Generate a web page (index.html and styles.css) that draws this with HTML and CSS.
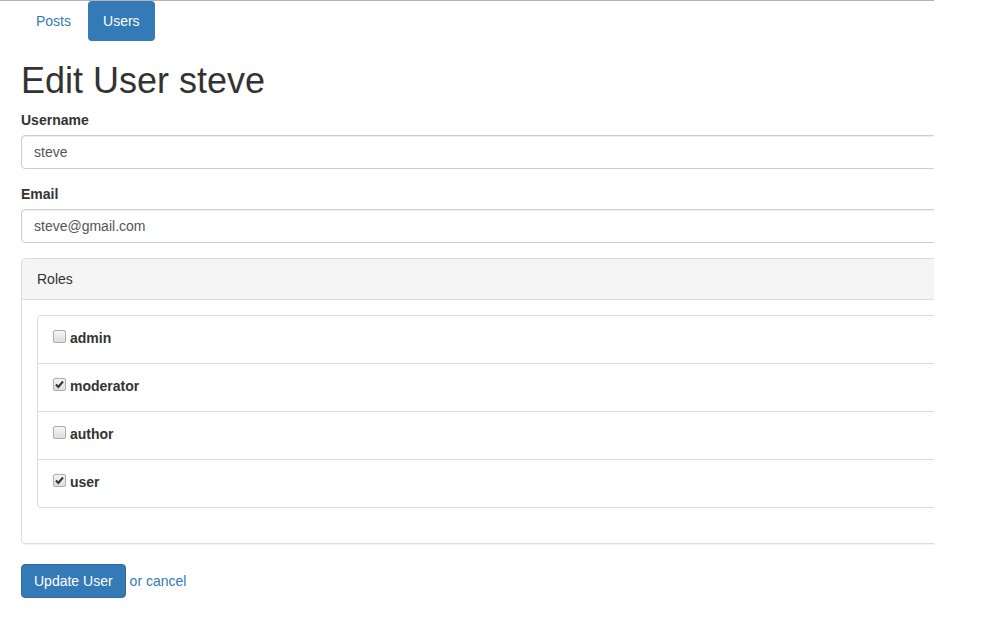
FILE: index.html
```html
<!DOCTYPE html>
<html>
<head>
<meta charset="utf-8">
<link rel="stylesheet" href="styles.css">
</head>
<body>
<div class="frame">
  <div class="container">
    <ul class="nav">
      <li><a href="#" class="pill">Posts</a></li>
      <li><a href="#" class="pill active">Users</a></li>
    </ul>
    <h1>Edit User steve</h1>
    <form>
      <div class="form-group">
        <label class="label">Username</label>
        <div class="input">steve</div>
      </div>
      <div class="form-group">
        <label class="label">Email</label>
        <div class="input">steve@gmail.com</div>
      </div>
      <div class="panel">
        <div class="panel-heading">Roles</div>
        <div class="panel-body">
          <div class="list">
            <div class="item"><span class="cb"></span><span class="role">admin</span></div>
            <div class="item"><span class="cb"><svg viewBox="0 0 13 13" width="13" height="13"><path d="M3 6.5 L5.3 9 L10 3.5" fill="none" stroke="#333" stroke-width="2"/></svg></span><span class="role">moderator</span></div>
            <div class="item"><span class="cb"></span><span class="role">author</span></div>
            <div class="item"><span class="cb"><svg viewBox="0 0 13 13" width="13" height="13"><path d="M3 6.5 L5.3 9 L10 3.5" fill="none" stroke="#333" stroke-width="2"/></svg></span><span class="role">user</span></div>
          </div>
        </div>
      </div>
      <div class="actions">
        <button type="button" class="btn">Update User</button>
        <a href="#" class="cancel">or cancel</a>
      </div>
    </form>
  </div>
</div>
</body>
</html>
```
FILE: styles.css
```css
html, body {
  margin: 0;
  padding: 0;
  background: #fff;
}
body {
  font-family: "Liberation Sans", Arial, sans-serif;
  font-size: 14px;
  line-height: 20px;
  color: #333;
}
.frame {
  width: 934px;
  height: 641px;
  border-top: 1px solid #b3b3b3;
  overflow: hidden;
  box-sizing: border-box;
}
.container {
  width: 1000px;
  padding-left: 21px;
  box-sizing: border-box;
}
.nav {
  list-style: none;
  margin: 0;
  padding: 0;
  display: flex;
  gap: 2px;
}
.pill {
  display: block;
  padding: 10px 15px;
  border-radius: 4px;
  color: #337ab7;
  text-decoration: none;
  line-height: 20px;
}
.pill.active {
  background: #337ab7;
  color: #fff;
}
h1 {
  font-size: 36px;
  font-weight: 500;
  line-height: 39px;
  margin: 20px 0 10px;
  color: #333;
}
.form-group {
  margin-bottom: 15px;
}
.label {
  display: block;
  font-weight: bold;
  margin-bottom: 5px;
}
.input {
  height: 34px;
  box-sizing: border-box;
  padding: 6px 12px;
  border: 1px solid #ccc;
  border-radius: 4px;
  box-shadow: inset 0 1px 1px rgba(0,0,0,.075);
  color: #555;
}
.panel {
  border: 1px solid #ddd;
  border-radius: 4px;
  margin-bottom: 20px;
  box-shadow: 0 1px 1px rgba(0,0,0,.05);
}
.panel-heading {
  background: #f5f5f5;
  border-bottom: 1px solid #ddd;
  padding: 10px 15px;
  border-radius: 3px 3px 0 0;
}
.panel-body {
  padding: 15px;
}
.list {
  margin-bottom: 20px;
}
.item {
  display: flex;
  align-items: center;
  height: 49px;
  box-sizing: border-box;
  padding: 0 15px 4px;
  border: 1px solid #ddd;
  margin-bottom: -1px;
}
.item:first-child {
  border-radius: 4px 4px 0 0;
}
.item:last-child {
  border-radius: 0 0 4px 4px;
  margin-bottom: 0;
}
.cb {
  width: 13px;
  height: 13px;
  box-sizing: border-box;
  border: 1px solid #adadad;
  border-radius: 2px;
  background: linear-gradient(#f4f4f4, #dedede);
  margin-right: 4px;
  margin-top: -2px;
  display: flex;
  align-items: center;
  justify-content: center;
  overflow: hidden;
}
.cb svg {
  display: block;
  flex: none;
}
.role {
  font-weight: bold;
}
.actions {
  display: flex;
  align-items: center;
  gap: 4px;
}
.btn {
  font-family: "Liberation Sans", Arial, sans-serif;
  font-size: 14px;
  line-height: 20px;
  padding: 6px 12px;
  height: 34px;
  color: #fff;
  background: #337ab7;
  border: 1px solid #2e6da4;
  border-radius: 4px;
}
.cancel {
  color: #337ab7;
  text-decoration: none;
}
```
